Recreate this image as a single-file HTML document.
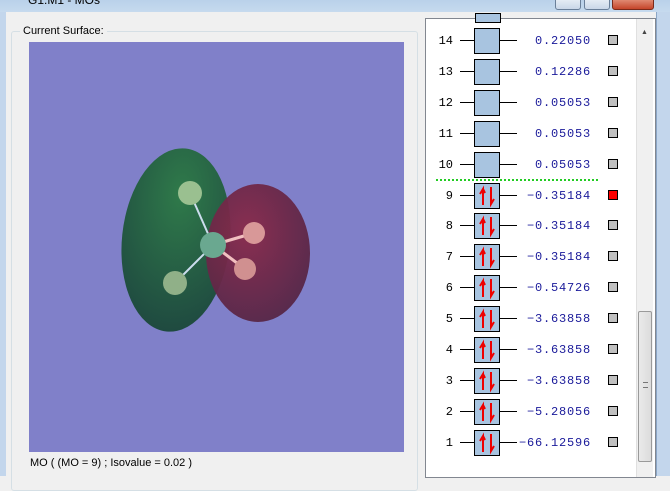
<!DOCTYPE html>
<html><head><style>
*{margin:0;padding:0;box-sizing:border-box}
body{width:670px;height:476px;overflow:hidden;background:#f0f0f0;font-family:"Liberation Sans",sans-serif;position:relative}
.title{position:absolute;left:0;top:0;width:670px;height:12px;background:linear-gradient(#b9d1ea,#c6daee);overflow:hidden}
.ttxt{position:absolute;left:28px;top:-7px;font-size:12px;color:#000}
.btn{position:absolute;top:-4px;height:14px;border:1px solid #6a7f99;border-radius:3px;background:linear-gradient(#eef3f9,#c9d7e8)}
.frameL{position:absolute;left:0;top:12px;width:6px;height:464px;background:#c3d6ec}
.frameR{position:absolute;left:656px;top:12px;width:14px;height:464px;background:#c3d6ec;border-left:1px solid #8ba6c6}
.grp{position:absolute;left:11px;top:31px;width:407px;height:460px;border:1px solid #d5dfe5;border-radius:3px}
.grpl{position:absolute;left:20px;top:25px;font-size:11px;background:#f0f0f0;padding:0 3px;color:#000}
.vp{position:absolute;left:29px;top:42px;width:375px;height:410px;background:#8080c9;overflow:hidden}
.cap{position:absolute;left:30px;top:457px;font-size:11px;color:#000}
.list{position:absolute;left:425px;top:18px;width:231px;height:460px;background:#fff;border:1px solid #828790}
.row{position:absolute;left:0;height:26px;width:210px;font-family:"Liberation Mono",monospace;font-size:12px}
.n{position:absolute;right:183px;top:6px;color:#000}
.ln{position:absolute;top:12px;height:1px;background:#000}
.bx{position:absolute;left:48px;top:0;width:26px;height:26px;background:#a8c4e0;border:1px solid #000}
.v{position:absolute;right:45px;top:6px;color:#1a1a9a;letter-spacing:0.8px}
.cb{position:absolute;left:182px;top:7px;width:10px;height:10px;background:#c0c0c0;border:1px solid #000}
.sb{position:absolute;left:210px;top:0;width:17px;height:458px;background:#f0f0f0;border-left:1px solid #e0e0e0}
.th{position:absolute;left:1px;top:292px;width:14px;height:151px;background:linear-gradient(90deg,#eaeaea,#dcdcdc);border:1px solid #9a9a9a;border-radius:2px}
</style></head><body>
<div class="title"><span class="ttxt">G1:M1 - MOs</span>
<div class="btn" style="left:555px;width:26px"></div>
<div class="btn" style="left:584px;width:26px"></div>
<div class="btn" style="left:612px;width:42px;background:linear-gradient(#e8a08a,#c4452a);border-color:#7a2a1a"></div>
</div>
<div class="frameL"></div>
<div class="grp"></div>
<div class="grpl">Current Surface:</div>
<div class="vp">
<svg width="375" height="410" viewBox="29 42 375 410">
<defs>
<radialGradient id="g" cx="0.5" cy="0.25" r="0.75"><stop offset="0" stop-color="#2f7a4a"/><stop offset="1" stop-color="#1f4a40"/></radialGradient>
<radialGradient id="r" cx="0.4" cy="0.35" r="0.7"><stop offset="0" stop-color="#8a2a4a"/><stop offset="1" stop-color="#552646"/></radialGradient>
</defs>
<ellipse cx="176" cy="240" rx="54" ry="92" transform="rotate(6 176 240)" fill="url(#g)"/>
<ellipse cx="258" cy="253" rx="52" ry="69" fill="url(#r)" opacity="0.95"/>
<line x1="190" y1="193" x2="213" y2="245" stroke="#cde" stroke-width="2"/>
<line x1="175" y1="283" x2="213" y2="245" stroke="#cde" stroke-width="2"/>
<line x1="254" y1="233" x2="213" y2="245" stroke="#f2c0c0" stroke-width="3"/>
<line x1="245" y1="269" x2="213" y2="245" stroke="#f2c0c0" stroke-width="3"/>
<circle cx="190" cy="193" r="12" fill="#9ac090"/>
<circle cx="175" cy="283" r="12" fill="#90b088"/>
<circle cx="213" cy="245" r="13" fill="#6aa890"/>
<circle cx="254" cy="233" r="11" fill="#d89898"/>
<circle cx="245" cy="269" r="11" fill="#d09090"/>
</svg></div>
<div class="cap">MO ( (MO = 9) ; Isovalue = 0.02 )</div>
<div class="list">
<div style="position:absolute;left:49px;top:-6px;width:26px;height:10px;background:#a8c4e0;border:1px solid #000"></div>
<div style="position:absolute;left:10px;top:160px;width:162px;border-top:2px dotted #22cc22"></div>
<div id="rows"></div>
<div class="sb"><div style="position:absolute;left:4px;top:10px;font-size:7px;color:#444">▲</div><div class="th"><div style="position:absolute;left:4px;top:70px;width:5px;height:6px;border-top:1px solid #777;border-bottom:1px solid #777"></div></div></div>
</div>
<div class="frameR"></div>
<script>
var d=[[14,"0.22050"],[13,"0.12286"],[12,"0.05053"],[11,"0.05053"],[10,"0.05053"],[9,"-0.35184"],[8,"-0.35184"],[7,"-0.35184"],[6,"-0.54726"],[5,"-3.63858"],[4,"-3.63858"],[3,"-3.63858"],[2,"-5.28056"],[1,"-66.12596"]];
var h="";d.forEach(function(r,i){var y=9+i*30.9;var occ=r[0]<=9;
h+='<div class="row" style="top:'+y+'px"><span class="n">'+r[0]+'</span><div class="ln" style="left:34px;width:14px"></div><div class="bx">'+(occ?'<svg width="24" height="24"><path d="M8 21V5l-3 5M8 5l2 4" stroke="#e00" stroke-width="2" fill="none"/><path d="M16 3v17l3-5" stroke="#e00" stroke-width="2" fill="none"/></svg>':'')+'</div><div class="ln" style="left:74px;width:17px"></div><span class="v">'+r[1].replace("-","&minus;")+'</span><div class="cb"'+(r[0]==9?' style="background:#f00"':'')+'></div></div>';});
document.getElementById("rows").innerHTML=h;
</script>
</body></html>
